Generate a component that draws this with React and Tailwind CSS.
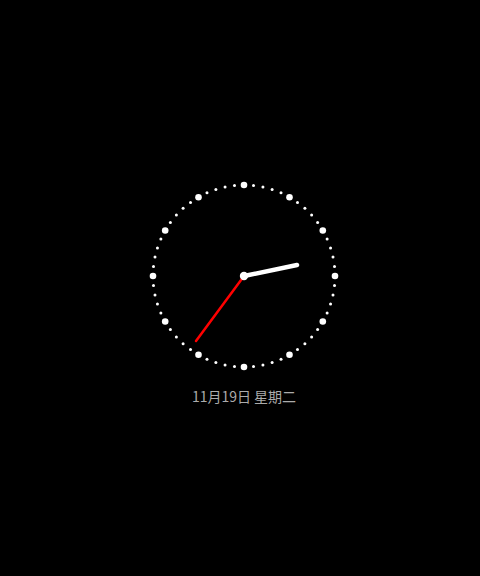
import React from 'react';

function Dial() {
  const dots = [];
  for (let i = 0; i < 60; i++) {
    const a = (i * 6 * Math.PI) / 180;
    const big = i % 5 === 0;
    dots.push(
      <circle
        key={i}
        cx={100 + 91 * Math.sin(a)}
        cy={100 - 91 * Math.cos(a)}
        r={big ? 3.3 : 1.5}
        fill="#fff"
      />
    );
  }
  return (
    <svg width="200" height="200" viewBox="0 0 200 200">
      {dots}
      {/* hour hand */}
      <line x1="100" y1="100" x2="153" y2="89" stroke="#fff" strokeWidth="4.5" strokeLinecap="round" />
      {/* second hand */}
      <line x1="100" y1="100" x2="52" y2="165" stroke="#f00" strokeWidth="2.5" strokeLinecap="round" />
      <circle cx="100" cy="100" r="4.2" fill="#fff" />
    </svg>
  );
}

export default function App() {
  return (
    <div className="w-[480px] h-[576px] bg-black flex flex-col items-center pl-[8px] pt-[176px]">
      <Dial />
      <div className="mt-[10px] text-[14px] leading-[20px] text-[#ababab] font-['Noto_Sans_CJK_SC',sans-serif]">
        11月19日 星期二
      </div>
    </div>
  );
}
